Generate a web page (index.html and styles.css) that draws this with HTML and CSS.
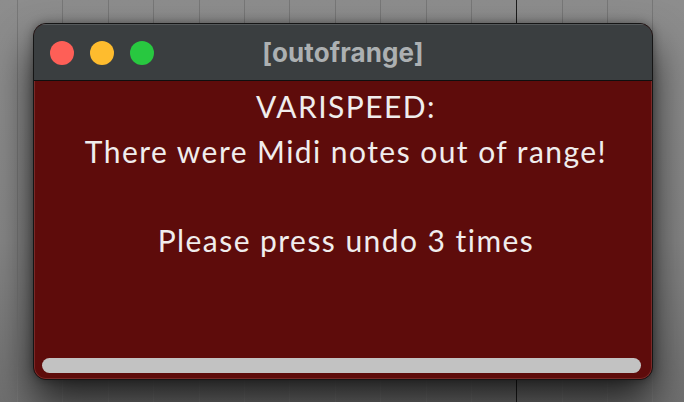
FILE: index.html
```html
<!DOCTYPE html>
<html>
<head>
<meta charset="utf-8">
<link rel="stylesheet" href="styles.css">
</head>
<body>
<div class="desk">
  <div class="grid">
    <span class="gl"></span><span class="gl"></span><span class="gl"></span><span class="gl"></span><span class="gl"></span><span class="gl"></span><span class="gl"></span><span class="gl"></span><span class="gl"></span><span class="gl"></span><span class="gl"></span><span class="gl dark"></span><span class="gl"></span><span class="gl"></span><span class="gl"></span>
  </div>
  <div class="window">
    <div class="titlebar">
      <div class="lights">
        <span class="light red"></span>
        <span class="light yellow"></span>
        <span class="light green"></span>
      </div>
      <div class="title">[outofrange]</div>
    </div>
    <div class="content">
      <div class="message">
        <div>VARISPEED:</div>
        <div>There were Midi notes out of range!</div>
        <div>&nbsp;</div>
        <div>Please press undo 3 times</div>
      </div>
      <div class="scrollbar"></div>
    </div>
  </div>
</div>
</body>
</html>
```
FILE: styles.css
```css
html, body {
  margin: 0;
  padding: 0;
}
body {
  width: 684px;
  height: 402px;
  overflow: hidden;
  background: linear-gradient(to bottom, #8d8d8d 0%, #858585 60%, #707070 100%);
}
.desk {
  position: relative;
  width: 684px;
  height: 402px;
}
.grid {
  position: absolute;
  inset: 0;
  display: flex;
  padding-left: 17px;
  gap: 0;
}
.gl {
  display: block;
  width: 1px;
  height: 402px;
  background: #777777;
  margin-right: 44.4px;
  flex: none;
}
.gl.dark {
  background: #1c1c1c;
}
.window {
  position: absolute;
  left: 33px;
  top: 23px;
  width: 618px;
  height: 355px;
  border: 1px solid #151515;
  border-radius: 13px;
  overflow: hidden;
  display: flex;
  flex-direction: column;
  box-shadow: 0 22px 40px rgba(0, 0, 0, 0.72), 0 0 10px rgba(0, 0, 0, 0.35);
  background: #5e0c0b;
}
.titlebar {
  height: 56px;
  flex: none;
  background: #3a3e40;
  border-bottom: 1px solid #0f0f0f;
  box-shadow: inset 0 1px 0 #55595b;
  display: flex;
  align-items: center;
  position: relative;
}
.lights {
  display: flex;
  gap: 16px;
  padding-left: 16px;
  padding-top: 1px;
}
.light {
  width: 24px;
  height: 24px;
  border-radius: 50%;
  display: block;
}
.red { background: #fe5f57; }
.yellow { background: #febc2e; }
.green { background: #28c840; }
.title {
  position: absolute;
  left: 0;
  right: 0;
  top: 0;
  bottom: 0;
  display: flex;
  align-items: center;
  justify-content: center;
  font-family: "Inter", "Noto Sans", sans-serif;
  font-weight: 700;
  font-size: 26px;
  letter-spacing: 0.1px;
  color: #acb0b2;
  padding-top: 1px;
}
.content {
  flex: 1;
  display: flex;
  flex-direction: column;
  justify-content: space-between;
  background: #5e0c0b;
  border: 1px solid #7a2a28;
  border-top: none;
  border-radius: 0 0 12px 12px;
}
.message {
  padding-top: 3px;
  padding-left: 6px;
  text-align: center;
  font-family: "Lato", "Noto Sans", sans-serif;
  font-size: 30px;
  line-height: 44.5px;
  letter-spacing: 1.45px;
  font-variant-ligatures: none;
  color: #f0eded;
}
.scrollbar {
  height: 15px;
  margin: 0 10px 5px 7px;
  border-radius: 8px;
  background: #c2c2c2;
}
```
